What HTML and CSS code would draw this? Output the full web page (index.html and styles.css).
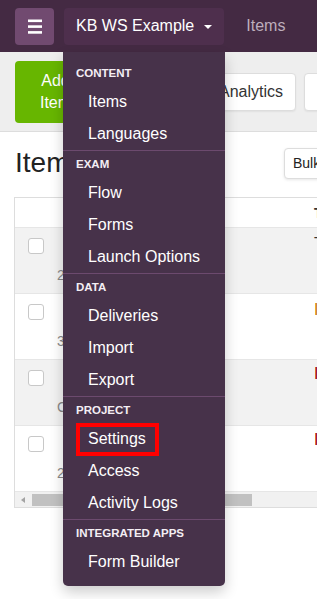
FILE: index.html
```html
<!DOCTYPE html>
<html lang="en">
<head>
<meta charset="utf-8">
<title>Items</title>
<link rel="stylesheet" href="styles.css">
</head>
<body>
<nav class="navbar">
  <button class="burger" aria-label="Menu">
    <svg width="14" height="15" viewBox="0 0 14 15"><rect y="0.5" width="14" height="2.6"/><rect y="6.3" width="14" height="2.6"/><rect y="12.1" width="14" height="2.6"/></svg>
  </button>
  <button class="brand">KB WS Example<span class="caret"></span></button>
  <a class="nav-link">Items</a>
</nav>

<div class="toolbar">
  <button class="btn btn-green">Add<br>Item</button>
  <button class="btn btn-white btn-preview">Preview</button>
  <button class="btn btn-white">Analytics</button>
  <button class="btn btn-white btn-fav"><span class="star">★</span> Favorites</button>
</div>

<div class="heading-row">
  <h1>Items</h1>
  <button class="btn-bulk">Bulk Actions</button>
</div>

<div class="table-wrap">
  <div class="row head">
    <div class="cell"></div>
    <div class="cell"></div>
    <div class="cell c3">Title</div>
  </div>
  <div class="row alt">
    <div class="cell cb"><span class="checkbox"></span></div>
    <div class="cell meta"><span>2,041</span></div>
    <div class="cell c3 dark">Text Entry</div>
  </div>
  <div class="row">
    <div class="cell cb"><span class="checkbox"></span></div>
    <div class="cell meta"><span>3,112</span></div>
    <div class="cell c3 orange">In Progress</div>
  </div>
  <div class="row alt">
    <div class="cell cb"><span class="checkbox"></span></div>
    <div class="cell meta"><span>C-118</span></div>
    <div class="cell c3 red pt">Inactive</div>
  </div>
  <div class="row">
    <div class="cell cb"><span class="checkbox"></span></div>
    <div class="cell meta"><span>2,087</span></div>
    <div class="cell c3 red pt">Inactive</div>
  </div>
  <div class="hscroll"><span class="arrow"></span><span class="thumb"></span></div>
</div>

<div class="dropdown">
  <div class="dd-header">CONTENT</div>
  <a class="dd-item">Items</a>
  <a class="dd-item">Languages</a>
  <div class="dd-divider"></div>
  <div class="dd-header">EXAM</div>
  <a class="dd-item">Flow</a>
  <a class="dd-item">Forms</a>
  <a class="dd-item">Launch Options</a>
  <div class="dd-divider"></div>
  <div class="dd-header">DATA</div>
  <a class="dd-item">Deliveries</a>
  <a class="dd-item">Import</a>
  <a class="dd-item">Export</a>
  <div class="dd-divider"></div>
  <div class="dd-header">PROJECT</div>
  <a class="dd-item marked">Settings<span class="highlight"></span></a>
  <a class="dd-item">Access</a>
  <a class="dd-item">Activity Logs</a>
  <div class="dd-divider"></div>
  <div class="dd-header">INTEGRATED APPS</div>
  <a class="dd-item">Form Builder</a>
</div>
</body>
</html>
```

FILE: styles.css
```css
* { box-sizing: border-box; margin: 0; padding: 0; }
html, body { overflow: hidden; }
body {
  position: relative;
  width: 317px;
  height: 599px;
  font-family: "Liberation Sans", Arial, sans-serif;
  color: #333;
  background: #fff;
}
button { font-family: inherit; cursor: pointer; }

.navbar {
  height: 52px;
  background: #442a43;
  display: flex;
  align-items: center;
  padding: 0 15px;
  white-space: nowrap;
}
.burger {
  flex: 0 0 39px;
  height: 37px;
  border: 0;
  border-radius: 4px;
  background: #714a70;
  display: flex;
  align-items: center;
  justify-content: center;
}
.burger svg { fill: #fff; display: block; }
.brand {
  flex: 0 0 159px;
  margin-left: 10px;
  height: 37px;
  padding: 0 12px;
  border: 0;
  border-radius: 4px;
  background: #4e2f4d;
  color: #fff;
  font-size: 16px;
  display: flex;
  align-items: center;
}
.caret {
  margin-left: 10px;
  margin-top: 1px;
  border-top: 4px solid #fff;
  border-left: 4px solid transparent;
  border-right: 4px solid transparent;
}
.nav-link {
  margin-left: 22px;
  color: #bdaebc;
  font-size: 16px;
}

.toolbar {
  height: 80px;
  background: #eee;
  border-bottom: 1px solid #ddd;
  display: flex;
  align-items: center;
  gap: 8px;
  padding-left: 15px;
  white-space: nowrap;
}
.btn {
  flex: 0 0 auto;
  font-size: 16px;
  border-radius: 4px;
}
.btn-green {
  width: 81px;
  height: 62px;
  background: #67b600;
  color: #fff;
  border: 0;
  line-height: 22px;
}
.btn-white {
  height: 38px;
  padding: 0 12px;
  background: #fff;
  color: #333;
  border: 1px solid #ddd;
  box-shadow: 0 1px 2px rgba(0,0,0,.06);
}
.btn-preview { width: 94px; }
.btn-fav { padding-left: 13px; }
.star { color: #e9a21c; }

.heading-row {
  height: 62px;
  margin-bottom: 3px;
  display: grid;
  grid-template-columns: 269px auto;
  align-items: center;
  padding-left: 15px;
  white-space: nowrap;
}
h1 {
  font-size: 28px;
  font-weight: normal;
  line-height: 1;
  color: #222;
}
.btn-bulk {
  justify-self: start;
  height: 31px;
  padding: 0 8px;
  font-size: 14px;
  color: #222;
  background: #fff;
  border: 1px solid #ddd;
  border-radius: 4px;
  box-shadow: 0 1px 3px rgba(0,0,0,.1);
}

.table-wrap {
  margin-left: 14px;
  width: 600px;
  border: 1px solid #ddd;
  overflow: hidden;
}
.row {
  display: grid;
  grid-template-columns: 35px 257px 1fr;
  height: 66px;
  border-top: 1px solid #e6e6e6;
  white-space: nowrap;
}
.row.head { height: 29px; border-top: 0; }
.row.alt { background: #f2f2f2; }
.cell { min-width: 0; }
.head .c3 { font-size: 14px; font-weight: bold; color: #333; align-self: center; padding-top: 0; }
.cb { padding: 10px 0 0 13px; }
.checkbox {
  display: block;
  width: 16px;
  height: 16px;
  border: 1px solid #c8c8c8;
  border-radius: 3px;
  background: #fff;
}
.meta {
  display: flex;
  align-items: flex-end;
  padding: 0 0 8px 7px;
  font-size: 14px;
  line-height: 20px;
  color: #888;
}
.c3 { padding: 6px 0 0 7px; font-size: 16px; line-height: 20px; }
.c3.pt { padding-top: 4px; }
.dark { color: #333; }
.orange { color: #c77800; }
.red { color: #9b0000; }

.hscroll {
  height: 16px;
  background: #f1f1f1;
  border-top: 1px solid #e6e6e6;
  display: flex;
  align-items: center;
}
.arrow {
  margin-left: 6px;
  border-right: 4px solid #a3a3a3;
  border-top: 3.5px solid transparent;
  border-bottom: 3.5px solid transparent;
}
.thumb {
  margin-left: 7px;
  width: 220px;
  height: 12px;
  background: #c1c1c1;
}

.dropdown {
  position: absolute;
  top: 52px;
  left: 63px;
  width: 162px;
  padding: 8px 0;
  background: #47324a;
  border-radius: 0 0 5px 5px;
  box-shadow: 0 6px 14px rgba(0,0,0,.2);
}
.dd-header {
  height: 26px;
  line-height: 26px;
  padding-left: 13px;
  font-size: 11.5px;
  font-weight: bold;
  color: #f4eef4;
  white-space: nowrap;
}
.dd-item {
  display: block;
  position: relative;
  height: 32px;
  line-height: 32px;
  padding-left: 25px;
  font-size: 16px;
  color: #fff;
  white-space: nowrap;
}
.dd-divider {
  height: 1px;
  background: #6c4a6e;
}
.highlight {
  position: absolute;
  left: 13px;
  top: 0;
  width: 83px;
  height: 33px;
  border: 4px solid #ff0000;
}
```
